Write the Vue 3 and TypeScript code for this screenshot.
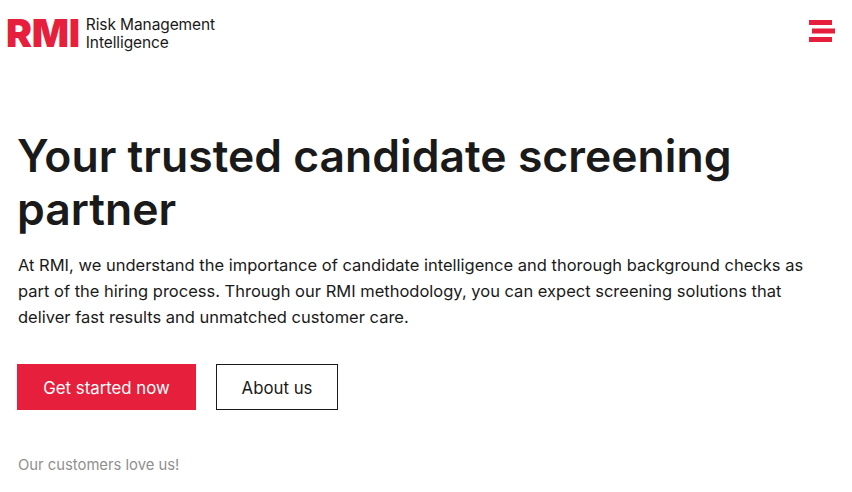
<script setup lang="ts">
const title = 'Your trusted candidate screening partner'
</script>

<template>
  <div class="page">
    <header class="top">
      <div class="logo">
        <span class="mark">RMI</span>
        <span class="name">Risk Management<br />Intelligence</span>
      </div>
      <button class="menu" aria-label="Menu">
        <svg width="26" height="22" viewBox="0 0 26 22">
          <path d="M0 0H23V5H0Z M3 8.500H26V13.500H3Z M0 17H23V22H0Z" fill="#e51f3c" />
        </svg>
      </button>
    </header>
    <main class="hero">
      <h1>{{ title }}</h1>
      <p class="lead">At RMI, we understand the importance of candidate intelligence and thorough background checks as part of the hiring process. Through our RMI methodology, you can expect screening solutions that deliver fast results and unmatched customer care.</p>
      <div class="actions">
        <a class="btn primary">Get started now</a>
        <a class="btn ghost">About us</a>
      </div>
      <p class="love">Our customers love us!</p>
    </main>
  </div>
</template>

<style>
html, body { margin: 0; background: #fff; }
</style>

<style scoped>
.page { width: 852px; height: 492px; overflow: hidden; font-family: Inter, "Liberation Sans", sans-serif; color: #1a1a1a; }
.top { display: flex; justify-content: space-between; align-items: flex-start; padding: 15px 17px 0 6px; height: 51px; box-sizing: content-box; }
.logo { display: flex; align-items: flex-start; gap: 6px; }
.mark { font-weight: 900; font-size: 39px; line-height: 36px; color: #e51f3c; letter-spacing: -0.3px; }
.name { font-size: 15.500px; line-height: 18px; letter-spacing: -0.1px; padding-top: 1px; }
.menu { border: 0; background: none; padding: 5px 0 0; }
.hero { padding: 64px 17px 0 18px; }
h1 { margin: 0 0 0 -1px; font-size: 44.500px; line-height: 53px; font-weight: 600; }
.lead { margin: 16px 0 0; font-size: 16.500px; line-height: 26px; }
.actions { display: flex; gap: 20px; margin: 34px 0 0 -1px; }
.btn { display: flex; align-items: center; justify-content: center; height: 46px; padding-top: 1px; font-size: 16.800px; box-sizing: border-box; }
.primary { width: 179px; background: #e51f3c; color: #fff; }
.ghost { width: 122px; border: 1px solid #1a1a1a; }
.love { margin: 46px 0 0; font-size: 14.800px; color: #8f8f8f; }
</style>
